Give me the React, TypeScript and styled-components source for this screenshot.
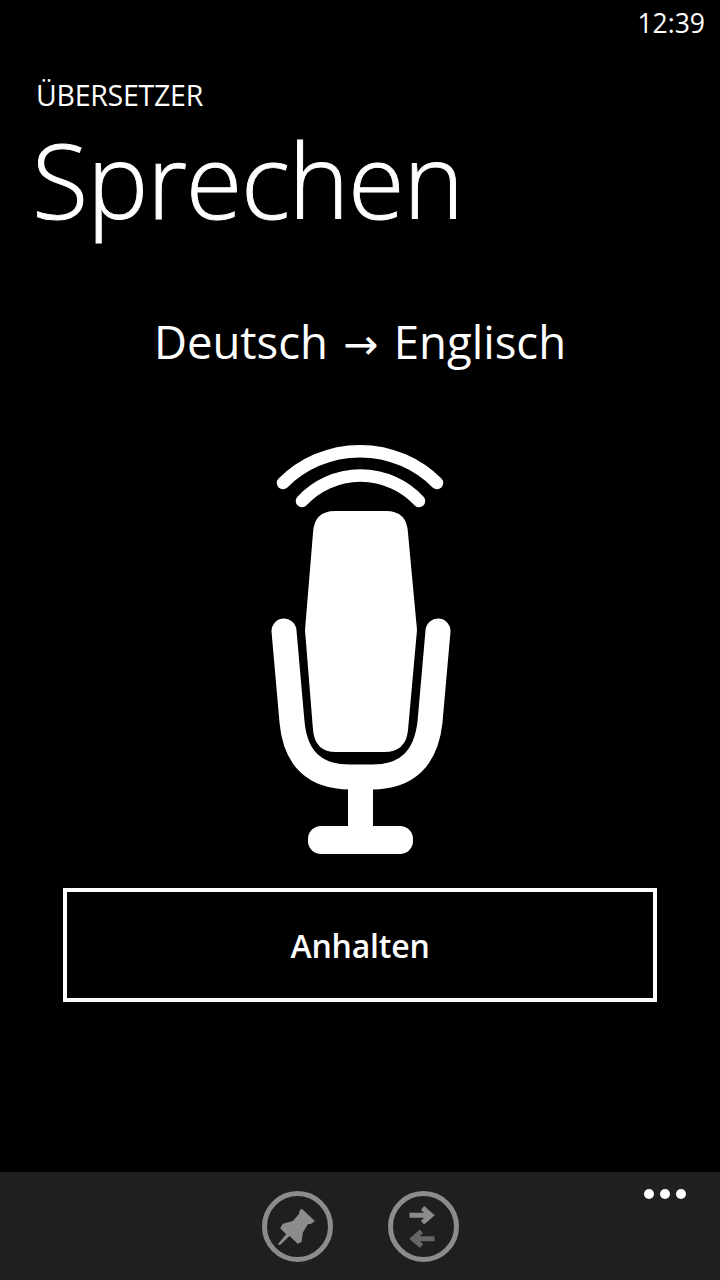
import React from "react";
import styled, { createGlobalStyle } from "styled-components";

const GlobalStyle = createGlobalStyle`
  html, body {
    margin: 0;
    padding: 0;
    background: #000;
  }
`;

const Page = styled.div`
  width: 720px;
  height: 1280px;
  display: flex;
  flex-direction: column;
  background: #000;
  color: #fff;
  font-family: "Open Sans", "Noto Sans", sans-serif;
  overflow: hidden;
`;

const StatusBar = styled.div`
  height: 46px;
  padding-right: 15px;
  display: flex;
  justify-content: flex-end;
  align-items: center;
  font-size: 26.5px;
  font-weight: 400;
`;

const Content = styled.main`
  flex: 1;
  display: flex;
  flex-direction: column;
  padding: 0 63px;
`;

const AppName = styled.div`
  margin: 29px 0 0 -27px;
  font-size: 28.5px;
  line-height: 40px;
  letter-spacing: -0.25px;
`;

const Title = styled.h1`
  margin: 1px 0 0 -31px;
  font-size: 103px;
  line-height: 126px;
  font-weight: 300;
  letter-spacing: -1.3px;
  -webkit-text-stroke: 0.9px #fff;
`;

const Direction = styled.div`
  margin-top: 64px;
  text-align: center;
  font-size: 45.5px;
  line-height: 70px;
  font-weight: 400;
  word-spacing: 3.5px;
`;

const DirectionArrow = styled.span`
  font-family: "DejaVu Sans", sans-serif;
  font-size: 42px;
`;

const MicWrap = styled.div`
  margin-top: 50px;
  display: flex;
  justify-content: center;
`;

const StopButton = styled.button`
  margin-top: 18px;
  width: 594px;
  height: 114px;
  border: 4px solid #fff;
  background: transparent;
  color: #fff;
  font-family: inherit;
  font-size: 32px;
  font-weight: 600;
  letter-spacing: -0.2px;
  padding: 0;
`;

const AppBar = styled.footer`
  position: relative;
  height: 108px;
  background: #1f1f1f;
  display: flex;
  justify-content: center;
  gap: 55px;
  padding-top: 19px;
  box-sizing: border-box;
`;

const RoundIcon = styled.div`
  width: 71px;
  height: 71px;
  border: 5px solid #8c8c8c;
  border-radius: 50%;
  box-sizing: border-box;
  display: flex;
  align-items: center;
  justify-content: center;
`;

const MoreDots = styled.div`
  position: absolute;
  top: 17px;
  right: 34px;
  display: flex;
  gap: 6px;
`;

const Dot = styled.span`
  width: 10px;
  height: 10px;
  border-radius: 50%;
  background: #fff;
`;

const MicIcon = () => (
  <svg width="220" height="440" viewBox="0 0 220 440">
    <g fill="none" stroke="#fff" strokeLinecap="round">
      <path d="M33 53 A109 109 0 0 1 187 53" strokeWidth="12.5" />
      <path d="M52 71 A80 80 0 0 1 169 71" strokeWidth="12.5" />
      <path
        d="M34 201 L42 292 Q47 347 100 347 H122 Q174 347 180 292 L188 201"
        strokeWidth="25"
      />
    </g>
    <path
      fill="#fff"
      d="M85 81 H136 Q157 81 158 103 L167 200 L158 300 Q156 322 134 322 H86 Q65 322 63 300 L55 200 L63 103 Q64 81 85 81Z"
    />
    <rect x="98" y="350" width="25" height="50" fill="#fff" />
    <rect x="58" y="396" width="105" height="28" rx="13" fill="#fff" />
  </svg>
);

const PinIcon = () => (
  <svg width="42" height="42" viewBox="0 0 42 42">
    <path
      fill="#8c8c8c"
      d="M25.8 2.7 L38.8 15 L35.2 17.7 L31.8 18.3 L26.8 26.7 L25.5 36 L21.8 37.7 L13.5 30 L4.2 39 L1.8 38.3 L10.2 28.3 L4.2 22.3 L6.8 17.7 L16.8 15 L22.8 8.3 L23.8 4.3 Z"
    />
  </svg>
);

const SwapIcon = () => (
  <svg width="42" height="42" viewBox="0 0 42 42">
    <path d="M7.5 9.3 H29 M20.5 2 L29 9.3 L20.5 16.6" fill="none" stroke="#8c8c8c" strokeWidth="5" />
    <path d="M32.5 32.7 H11 M19.5 25.4 L11 32.7 L19.5 40" fill="none" stroke="#666" strokeWidth="5" />
  </svg>
);

const App = () => {
  return (
    <Page>
      <GlobalStyle />
      <StatusBar>12:39</StatusBar>
      <Content>
        <AppName>ÜBERSETZER</AppName>
        <Title>Sprechen</Title>
        <Direction>
          Deutsch <DirectionArrow>→</DirectionArrow> Englisch
        </Direction>
        <MicWrap>
          <MicIcon />
        </MicWrap>
        <StopButton>Anhalten</StopButton>
      </Content>
      <AppBar>
        <RoundIcon>
          <PinIcon />
        </RoundIcon>
        <RoundIcon>
          <SwapIcon />
        </RoundIcon>
        <MoreDots>
          <Dot />
          <Dot />
          <Dot />
        </MoreDots>
      </AppBar>
    </Page>
  );
};

export default App;
